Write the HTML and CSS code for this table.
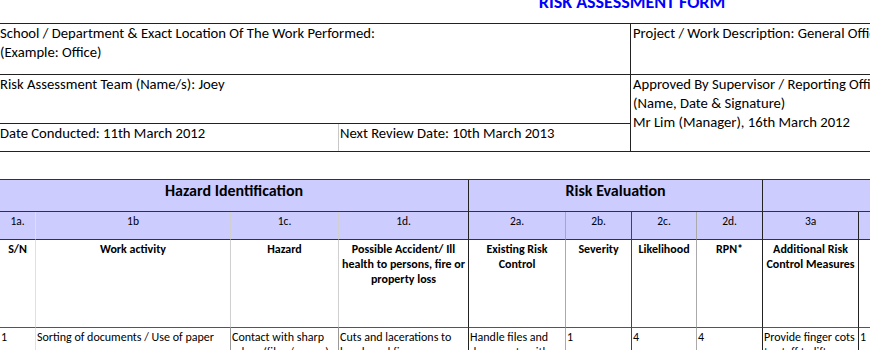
FILE: index.html
```html
<!DOCTYPE html>
<html lang="en">
<head>
<meta charset="utf-8">
<title>Risk Assessment Form</title>
<link rel="stylesheet" href="styles.css">
</head>
<body>
<div class="sheet">
  <div class="title">RISK ASSESSMENT FORM</div>
  <div class="info">
    <div class="cell loc">School / Department &amp; Exact Location Of The Work Performed:<br>(Example: Office)</div>
    <div class="cell proj">Project / Work Description: General Office Work</div>
    <div class="cell team">Risk Assessment Team (Name/s): Joey</div>
    <div class="cell appr">Approved By Supervisor / Reporting Officer<br>(Name, Date &amp; Signature)<br>Mr Lim (Manager), 16th March 2012</div>
    <div class="cell dates">
      <div class="date-a">Date Conducted: 11th March 2012</div>
      <div class="date-b">Next Review Date: 10th March 2013</div>
    </div>
  </div>

  <table class="risk">
    <colgroup>
      <col class="w-sn"><col class="w-act"><col class="w-haz"><col class="w-acc">
      <col class="w-ctl"><col class="w-sev"><col class="w-lik"><col class="w-rpn">
      <col class="w-add"><col class="w-sev2"><col class="w-lik2"><col class="w-rpn2"><col class="w-rest">
    </colgroup>
    <tr class="group">
      <th colspan="4" class="gend">Hazard Identification</th>
      <th colspan="4" class="gend">Risk Evaluation</th>
      <th colspan="5">Risk Control</th>
    </tr>
    <tr class="num">
      <td class="faint">1a.</td>
      <td class="lite">1b</td>
      <td class="lite">1c.</td>
      <td class="gend">1d.</td>
      <td class="mid">2a.</td>
      <td class="dark">2b.</td>
      <td class="mid">2c.</td>
      <td class="gend">2d.</td>
      <td class="gend">3a</td>
      <td class="mid">3b.</td>
      <td class="mid">3c.</td>
      <td class="mid">3d.</td>
      <td class="mid">3e.</td>
    </tr>
    <tr class="head">
      <th class="faint">S/N</th>
      <th class="lite">Work activity</th>
      <th class="lite">Hazard</th>
      <th class="gend">Possible Accident/ Ill health to persons, fire or property loss</th>
      <th class="mid">Existing Risk Control</th>
      <th class="dark">Severity</th>
      <th class="mid">Likelihood</th>
      <th class="gend">RPN*</th>
      <th class="gend">Additional Risk Control Measures</th>
      <th class="mid">Severity</th>
      <th class="mid">Likelihood</th>
      <th class="mid">RPN*</th>
      <th class="mid">Implementation Person</th>
    </tr>
    <tr class="data">
      <td class="faint">1</td>
      <td class="grey">Sorting of documents / Use of paper</td>
      <td class="grey">Contact with sharp edges (files / paper)</td>
      <td class="gend">Cuts and lacerations to hands and fingers</td>
      <td class="mid">Handle files and documents with care</td>
      <td class="dark">1</td>
      <td class="mid">4</td>
      <td class="gend">4</td>
      <td class="gend">Provide finger cots to staff to lift documents</td>
      <td class="mid">1</td>
      <td class="mid">2</td>
      <td class="mid">2</td>
      <td class="mid">Joey</td>
    </tr>
  </table>
</div>
</body>
</html>
```

FILE: styles.css
```css
html, body {
  margin: 0;
  padding: 0;
}
body {
  overflow: hidden;
  background: #ffffff;
  color: #000000;
  font-family: Carlito, "Liberation Sans", sans-serif;
}
.sheet {
  width: 1264px;
}
.title {
  margin-top: -6px;
  height: 29px;
  font-size: 18px;
  line-height: 16px;
  font-weight: bold;
  color: #0000ff;
  text-align: center;
}
.info {
  display: grid;
  grid-template-columns: 630px 634px;
  grid-template-rows: 51px 49px 28px;
  border-top: 1px solid #222222;
  font-size: 14.67px;
  line-height: 19px;
  white-space: nowrap;
}
.cell {
  box-sizing: border-box;
  border-bottom: 1px solid #222222;
  overflow: hidden;
}
.loc { grid-column: 1; grid-row: 1; }
.team { grid-column: 1; grid-row: 2; }
.dates {
  grid-column: 1;
  grid-row: 3;
  display: grid;
  grid-template-columns: 339px 1fr;
}
.proj, .appr {
  border-left: 1px solid #222222;
  padding-left: 2px;
}
.proj { grid-column: 2; grid-row: 1; }
.appr { grid-column: 2; grid-row: 2 / span 2; }
.date-a {
  border-right: 1px solid #c8c8c8;
}
.date-b {
  padding-left: 1px;
}

.risk {
  margin-top: 27px;
  width: 1264px;
  table-layout: fixed;
  border-collapse: separate;
  border-spacing: 0;
  border-top: 1px solid #333333;
}
.w-sn { width: 36px; }
.w-act { width: 195px; }
.w-haz { width: 108px; }
.w-acc { width: 130px; }
.w-ctl { width: 97px; }
.w-sev { width: 66px; }
.w-lik { width: 65px; }
.w-rpn { width: 66px; }
.w-add { width: 96px; }
.w-sev2 { width: 80px; }
.w-lik2 { width: 80px; }
.w-rpn2 { width: 80px; }
.w-rest { width: 165px; }

.risk th, .risk td {
  padding: 0 1px;
  border-right: 1px solid #aaaaaa;
  vertical-align: top;
  overflow: hidden;
}
.risk .faint { border-right-color: #e0e0e0; }
.risk .lite { border-right-color: #d0d0d0; }
.risk .grey { border-right-color: #999999; }
.risk .mid { border-right-color: #aaaaaa; }
.risk .dark { border-right-color: #444444; }
.risk .gend { border-right-color: #222222; }

.group th {
  height: 32px;
  box-sizing: border-box;
  background: #ccccff;
  border-bottom: 1px solid #333333;
  border-right-color: #222222;
  padding-top: 2px;
  font-size: 16px;
  line-height: 18px;
  font-weight: bold;
  text-align: center;
  white-space: nowrap;
}
.num td {
  height: 28px;
  box-sizing: border-box;
  background: #ccccff;
  border-bottom: 1px solid #333333;
  padding-top: 2px;
  font-size: 11.5px;
  line-height: 14px;
  text-align: center;
}
.head th {
  height: 88px;
  box-sizing: border-box;
  border-bottom: 1px solid #555555;
  padding-top: 2px;
  font-size: 12px;
  line-height: 15px;
  font-weight: bold;
  text-align: center;
}
.data td {
  height: 60px;
  box-sizing: border-box;
  padding-top: 2px;
  font-size: 12px;
  line-height: 14.5px;
  text-align: left;
}
```
